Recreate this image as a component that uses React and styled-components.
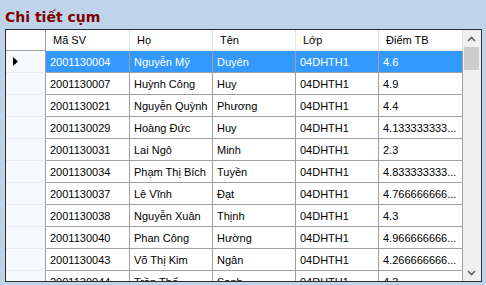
import React from 'react'
import styled, { createGlobalStyle, css } from 'styled-components'

const GlobalStyle = createGlobalStyle`
  html, body {
    margin: 0;
    padding: 0;
    background: #bfd4eb;
  }

  body {
    width: 486px;
    height: 285px;
    overflow: hidden;
    font-family: 'Liberation Sans', Arial, sans-serif;
  }
`

const Page = styled.div`
  padding: 0 0 0 5px;
`

const Title = styled.h1`
  margin: 0;
  padding: 9px 0 4px 0;
  height: 16px;
  line-height: 16px;
  font-family: 'DejaVu Sans', Verdana, sans-serif;
  font-size: 14px;
  font-weight: bold;
  color: #800000;
`

const GridBox = styled.div`
  display: flex;
  width: 477px;
  height: 253px;
  box-sizing: border-box;
  border: 1px solid #2e2e2e;
  background: #ffffff;
  overflow: hidden;
`

const Grid = styled.div`
  display: grid;
  grid-template-columns: 40px 84px 83px 83px 83px 84px;
  grid-template-rows: 21px;
  grid-auto-rows: 22px;
  align-content: start;
  width: 457px;
  overflow: hidden;
  font-size: 11px;
  color: #000000;
`

const cellBase = css`
  box-sizing: border-box;
  display: flex;
  align-items: center;
  white-space: nowrap;
  overflow: hidden;
  border-right: 1px solid #a0a0a0;
  border-bottom: 1px solid #a0a0a0;
`

const Corner = styled.div`
  ${cellBase};
  background: #ffffff;
`

const HeaderCell = styled.div`
  ${cellBase};
  padding-left: 7px;
  background: #ffffff;
  border-right-color: #e5e5e5;
  border-bottom-color: #e5e5e5;

  &:last-child {
    border-right-color: #a0a0a0;
  }
`

const RowHeader = styled.div`
  ${cellBase};
  padding-left: 7px;
  background: #f7fafd;
  border-bottom-color: #e3ebf5;
`

const Cell = styled.div`
  ${cellBase};
  padding-left: 4px;
  background: ${({ selected }) => (selected ? '#3399ff' : '#ffffff')};
  color: ${({ selected }) => (selected ? '#ffffff' : '#000000')};
`

const Scrollbar = styled.div`
  display: flex;
  flex-direction: column;
  width: 18px;
  background: #f0f0f0;
`

const ArrowButton = styled.div`
  display: flex;
  align-items: center;
  justify-content: center;
  height: 17px;
  padding-right: 1px;
`

const Track = styled.div`
  flex: 1;
  padding-left: 1px;
`

const Thumb = styled.div`
  width: 15px;
  height: 23px;
  background: #cdcdcd;
`

const Chevron = ({ up }) => (
  <svg width="9" height="6" viewBox="0 0 9 6">
    <path
      d={up ? 'M1 5 L4.5 1.5 L8 5' : 'M1 1 L4.5 4.5 L8 1'}
      fill="none"
      stroke="#606060"
      strokeWidth="1.6"
    />
  </svg>
)

const RowArrow = () => (
  <svg width="5" height="9" viewBox="0 0 5 9">
    <path d="M0 0 L5 4.5 L0 9 Z" fill="#000000" />
  </svg>
)

const columns = ['Mã SV', 'Họ', 'Tên', 'Lớp', 'Điểm TB']

const rows = [
  ['2001130004', 'Nguyễn Mỹ', 'Duyên', '04DHTH1', '4.6'],
  ['2001130007', 'Huỳnh Công', 'Huy', '04DHTH1', '4.9'],
  ['2001130021', 'Nguyễn Quỳnh', 'Phương', '04DHTH1', '4.4'],
  ['2001130029', 'Hoàng Đức', 'Huy', '04DHTH1', '4.133333333...'],
  ['2001130031', 'Lai Ngô', 'Minh', '04DHTH1', '2.3'],
  ['2001130034', 'Phạm Thị Bích', 'Tuyền', '04DHTH1', '4.833333333...'],
  ['2001130037', 'Lê Vĩnh', 'Đạt', '04DHTH1', '4.766666666...'],
  ['2001130038', 'Nguyễn Xuân', 'Thịnh', '04DHTH1', '4.3'],
  ['2001130040', 'Phan Công', 'Hường', '04DHTH1', '4.966666666...'],
  ['2001130043', 'Võ Thị Kim', 'Ngân', '04DHTH1', '4.266666666...'],
  ['2001130044', 'Trần Thế', 'Sanh', '04DHTH1', '4.3'],
]

const selectedIndex = 0

export default function App() {
  return (
    <>
      <GlobalStyle />
      <Page>
        <Title>Chi tiết cụm</Title>
        <GridBox>
          <Grid>
            <Corner />
            {columns.map((col) => (
              <HeaderCell key={col}>{col}</HeaderCell>
            ))}
            {rows.map((row, i) => (
              <React.Fragment key={row[0]}>
                <RowHeader>{i === selectedIndex && <RowArrow />}</RowHeader>
                {row.map((value, j) => (
                  <Cell key={j} selected={i === selectedIndex}>
                    {value}
                  </Cell>
                ))}
              </React.Fragment>
            ))}
          </Grid>
          <Scrollbar>
            <ArrowButton>
              <Chevron up />
            </ArrowButton>
            <Track>
              <Thumb />
            </Track>
            <ArrowButton>
              <Chevron />
            </ArrowButton>
          </Scrollbar>
        </GridBox>
      </Page>
    </>
  )
}
